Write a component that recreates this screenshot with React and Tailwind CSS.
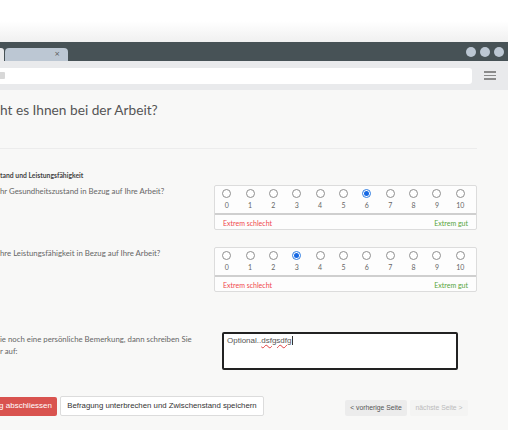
import React from 'react';

const nums = [0, 1, 2, 3, 4, 5, 6, 7, 8, 9, 10];

function Scale({ value }) {
  return (
    <div className="w-[263px] h-[45px] border border-[#dcdcdc] rounded-[2px] bg-[#fdfdfd] flex flex-col">
      <div className="grid grid-cols-11 pr-[4px] pt-[3px]">
        {nums.map((n) => (
          <div key={n} className="flex flex-col items-center">
            <span
              className={
                'w-[9px] h-[9px] rounded-full border flex items-center justify-center bg-white ' +
                (n === value ? 'border-[#2f7de1]' : 'border-[#8f8f8f]')
              }
            >
              {n === value && <span className="w-[5px] h-[5px] rounded-full bg-[#1668e3]" />}
            </span>
            <span className="mt-[3px] text-[7px] leading-[9px] text-[#666]">{n}</span>
          </div>
        ))}
      </div>
      <div className="mt-[3px] h-[2px] bg-[#cfcfcf]" />
      <div className="flex justify-between px-[8px] pt-[3px] text-[7px] leading-[10px]">
        <span className="text-[#f0474b]">Extrem schlecht</span>
        <span className="text-[#56a43a]">Extrem gut</span>
      </div>
    </div>
  );
}

export default function App() {
  return (
    <div className="w-[508px] h-[430px] overflow-hidden bg-white flex flex-col font-['Lato',sans-serif]">
      <div className="h-[42px] bg-gradient-to-b from-white via-white to-[#f0f0f0]" />

      <div className="h-[19px] bg-[#475256] flex items-end justify-between">
        <div className="flex items-end h-full">
          <div className="w-[4px] h-[13px] bg-[#e9eaec] rounded-tr-[3px]" />
          <div className="ml-[1px] w-[63px] h-[13px] bg-[#bcc7d3] rounded-t-[4px] flex items-center justify-end pr-[8px]">
            <span className="text-[7px] leading-none text-[#555] font-['DejaVu_Sans',sans-serif]">×</span>
          </div>
        </div>
        <div className="flex items-center gap-[4px] self-center pr-[4px]">
          <span className="w-[10px] h-[10px] rounded-full bg-[#bcc7d3]" />
          <span className="w-[10px] h-[10px] rounded-full bg-[#bcc7d3]" />
          <span className="w-[10px] h-[10px] rounded-full bg-[#bcc7d3]" />
        </div>
      </div>

      <div className="h-[29px] bg-[#e9eaec] flex items-center">
        <div className="w-[472px] h-[16px] bg-white rounded-r-[3px] flex items-center">
          <span className="w-[5px] h-[7px] bg-[#d8d8d8] rounded-r-[1px]" />
        </div>
        <div className="ml-[12px] flex flex-col gap-[2px]">
          <span className="w-[12px] h-[1.5px] bg-[#8a8a8a]" />
          <span className="w-[12px] h-[1.5px] bg-[#8a8a8a]" />
          <span className="w-[12px] h-[1.5px] bg-[#8a8a8a]" />
        </div>
      </div>

      <div className="flex-1 bg-[#f8f8f7] flex flex-col pr-[31px]">
        <div className="pt-[10px] text-[13.7px] leading-[20px] text-[#555]">ht es Ihnen bei der Arbeit?</div>
        <div className="mt-[28px] h-[1px] bg-[#ececec]" />

        <div className="mt-[21px] text-[6.8px] leading-[10px] font-bold text-[#444]">tand und Leistungsfähigkeit</div>

        <div className="mt-[5px] flex justify-between">
          <div className="pt-[1px] text-[7.8px] leading-[11px] text-[#666]">hr Gesundheitszustand in Bezug auf Ihre Arbeit?</div>
          <Scale value={6} />
        </div>

        <div className="mt-[17px] flex justify-between">
          <div className="pt-[1px] text-[7.8px] leading-[11px] text-[#666]">hre Leistungsfähigkeit in Bezug auf Ihre Arbeit?</div>
          <Scale value={3} />
        </div>

        <div className="mt-[40px] flex justify-between">
          <div className="pt-[1px] text-[7.8px] leading-[12px] text-[#666] w-[200px]">
            ie noch eine persönliche Bemerkung, dann schreiben Sie
            <br />r auf:
          </div>
          <div className="mr-[19px] w-[236px] h-[38px] border-2 border-[#222] rounded-[2px] bg-white px-[3px] pt-[1px] font-['Liberation_Sans',sans-serif] text-[8px] leading-[12px] text-[#555]">
            Optional..<span className="underline decoration-wavy decoration-[#e04040] decoration-1 underline-offset-1">dsfgsdfg</span>
            <span className="inline-block w-[0.5px] h-[9px] bg-[#333] align-middle" />
          </div>
        </div>

        <div className="mt-[26px] flex items-center justify-between font-['Liberation_Sans',sans-serif]">
          <div className="flex items-center gap-[3px]">
            <div className="w-[57px] h-[19px] bg-[#d9534f] rounded-r-[2px] flex items-center justify-end pr-[5px] whitespace-nowrap text-[8px] text-white">
              g abschliessen
            </div>
            <div className="w-[204px] h-[20px] border border-[#dcdcdc] bg-white rounded-[2px] flex items-center justify-center whitespace-nowrap text-[7.8px] text-[#333]">
              Befragung unterbrechen und Zwischenstand speichern
            </div>
          </div>
          <div className="flex items-center gap-[3px] mr-[9px] mt-[4px]">
            <div className="w-[62px] h-[16px] bg-[#ececec] rounded-[2px] flex items-center justify-center whitespace-nowrap text-[6.8px] text-[#555]">
              &lt; vorherige Seite
            </div>
            <div className="w-[58px] h-[16px] bg-[#f4f4f3] rounded-[2px] flex items-center justify-center whitespace-nowrap text-[6.8px] text-[#bbb]">
              nächste Seite &gt;
            </div>
          </div>
        </div>
      </div>
    </div>
  );
}
